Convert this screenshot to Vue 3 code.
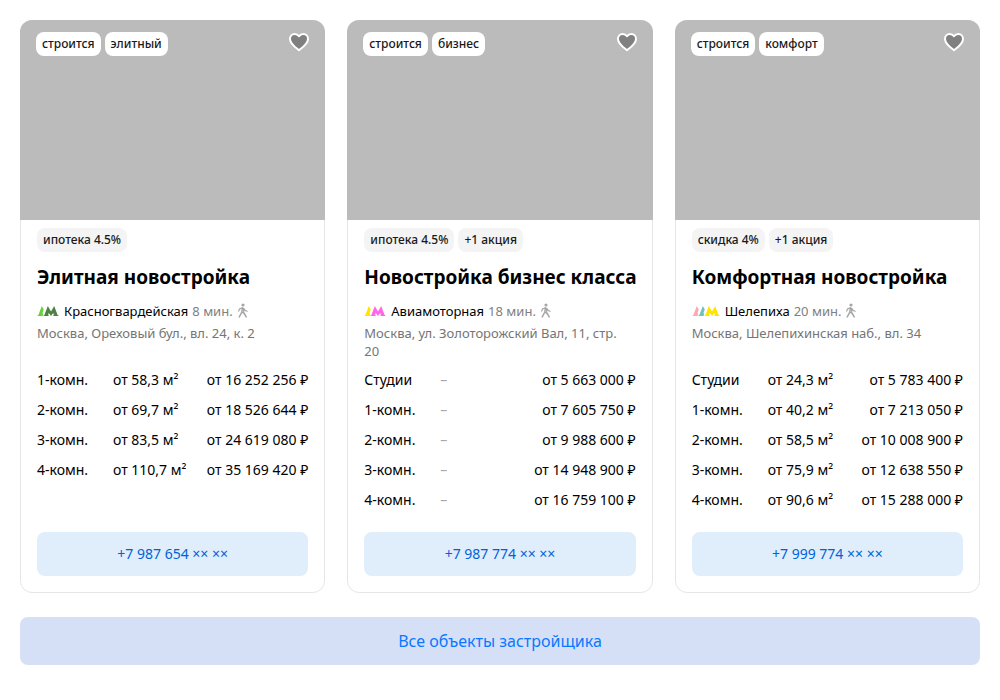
<script setup>
const cards = [
  {
    title: 'Элитная новостройка',
    labels: ['строится', 'элитный'],
    offers: ['ипотека 4.5%'],
    lines: ['#67d337', '#4f8242'],
    metro: 'Красногвардейская',
    time: '8 мин.',
    address: 'Москва, Ореховый бул., вл. 24, к. 2',
    rooms: [
      ['1-комн.', 'от 58,3 м²', 'от 16 252 256 ₽'],
      ['2-комн.', 'от 69,7 м²', 'от 18 526 644 ₽'],
      ['3-комн.', 'от 83,5 м²', 'от 24 619 080 ₽'],
      ['4-комн.', 'от 110,7 м²', 'от 35 169 420 ₽'],
    ],
    phone: '+7 987 654 ×× ××',
  },
  {
    title: 'Новостройка бизнес класса',
    labels: ['строится', 'бизнес'],
    offers: ['ипотека 4.5%', '+1 акция'],
    lines: ['#ffe400', '#ff66e8'],
    metro: 'Авиамоторная',
    time: '18 мин.',
    address: 'Москва, ул. Золоторожский Вал, 11, стр. 20',
    rooms: [
      ['Студии', '', 'от 5 663 000 ₽'],
      ['1-комн.', '', 'от 7 605 750 ₽'],
      ['2-комн.', '', 'от 9 988 600 ₽'],
      ['3-комн.', '', 'от 14 948 900 ₽'],
      ['4-комн.', '', 'от 16 759 100 ₽'],
    ],
    phone: '+7 987 774 ×× ××',
  },
  {
    title: 'Комфортная новостройка',
    labels: ['строится', 'комфорт'],
    offers: ['скидка 4%', '+1 акция'],
    lines: ['#ffa8af', '#6fc1ba', '#ffe400'],
    metro: 'Шелепиха',
    time: '20 мин.',
    address: 'Москва, Шелепихинская наб., вл. 34',
    rooms: [
      ['Студии', 'от 24,3 м²', 'от 5 783 400 ₽'],
      ['1-комн.', 'от 40,2 м²', 'от 7 213 050 ₽'],
      ['2-комн.', 'от 58,5 м²', 'от 10 008 900 ₽'],
      ['3-комн.', 'от 75,9 м²', 'от 12 638 550 ₽'],
      ['4-комн.', 'от 90,6 м²', 'от 15 288 000 ₽'],
    ],
    phone: '+7 999 774 ×× ××',
  },
]

const metroWidth = (card) => 16 + (card.lines.length - 1) * 6
</script>

<template>
  <main class="page">
    <section class="cards">
      <article v-for="card in cards" :key="card.title" class="card">
        <div class="photo">
          <ul class="tags">
            <li v-for="label in card.labels" :key="label" class="tag tag-light">{{ label }}</li>
          </ul>
          <button class="like" type="button" aria-label="В избранное">
            <svg width="24" height="24" viewBox="0 0 24 24">
              <path
                d="M12 20.2C8.6 17.6 3 13.8 3 8.9C3 6 5.1 3.9 7.6 3.9C9.5 3.9 11 4.7 12 6.2C13 4.7 14.5 3.9 16.4 3.9C18.9 3.9 21 6 21 8.9C21 13.8 15.4 17.6 12 20.2Z"
                fill="#808080"
                stroke="#fff"
                stroke-width="2"
                stroke-linejoin="round"
              />
            </svg>
          </button>
        </div>
        <div class="body">
          <ul class="tags">
            <li v-for="offer in card.offers" :key="offer" class="tag">{{ offer }}</li>
          </ul>
          <h3 class="title">{{ card.title }}</h3>
          <div class="metro">
            <svg :width="metroWidth(card)" height="12" :viewBox="`0 0 ${metroWidth(card)} 12`" aria-hidden="true">
              <template v-for="(color, i) in card.lines" :key="color">
                <path
                  v-if="i < card.lines.length - 1"
                  :transform="`translate(${i * 6} 0)`"
                  d="M0.5 11V10.2H1.3L4.8 1L6.8 4.6L5.6 7.6L6 9.6L5.6 11H0.5Z"
                  :fill="color"
                />
                <path
                  v-else
                  :transform="`translate(${i * 6} 0)`"
                  d="M0.5 11V10.2H1.3L4.8 1L8 6.6L11.2 1L14.7 10.2H15.5V11H10.2V10.2H11L10.2 7.9L8 11L5.8 7.9L5 10.2H5.8V11Z"
                  :fill="color"
                />
              </template>
            </svg>
            <span class="station">{{ card.metro }}</span>
            <span class="time">{{ card.time }}</span>
            <svg class="walk" width="12" height="16" viewBox="0 0 12 16" fill="none" stroke="#a6a6a6" aria-hidden="true">
              <circle cx="6" cy="2" r="1.6" fill="#a6a6a6" stroke="none" />
              <path d="M5.5 4.5L4.8 9L2 14.5M5 9L7.5 10.8L9.5 14.5" stroke-width="1.5" />
              <path d="M5.8 4.6L2.5 6L1.5 8.5M6.3 4.8L8 7.2L10.5 8.5M6.5 5L6.8 10" stroke-width="1.2" />
            </svg>
          </div>
          <p class="address">{{ card.address }}</p>
          <table class="rooms">
            <tbody>
              <tr v-for="room in card.rooms" :key="room[0]">
                <th scope="row">{{ room[0] }}</th>
                <td :class="{ empty: !room[1] }">{{ room[1] || '–' }}</td>
                <td class="price">{{ room[2] }}</td>
              </tr>
            </tbody>
          </table>
          <button class="phone" type="button">{{ card.phone }}</button>
        </div>
      </article>
    </section>
    <a class="all" href="#">Все объекты застройщика</a>
  </main>
</template>

<style>
body {
  background: #fff;
}
</style>

<style scoped>
.page {
  padding: 20px;
  font-family: "Noto Sans", "Open Sans", sans-serif;
  font-size: 14px;
  line-height: 18px;
  color: #000;
}
.page * {
  box-sizing: border-box;
}
.cards {
  display: grid;
  grid-template-columns: repeat(3, minmax(0, 1fr));
  gap: 22px;
}
.card {
  display: flex;
  flex-direction: column;
  border: 1px solid #e6e6e6;
  border-radius: 12px;
}
.photo {
  display: flex;
  justify-content: space-between;
  align-items: flex-start;
  height: 200px;
  margin: -1px -1px 0;
  padding: 12px 14px 0 16px;
  background: #bbb;
  border-radius: 12px 12px 0 0;
}
.tags {
  display: flex;
  gap: 4px;
  margin: 0;
  padding: 0;
  list-style: none;
}
.tag {
  padding: 0 6px;
  border-radius: 8px;
  background: #f4f4f4;
  color: #1a1a1a;
  font-size: 12px;
  font-weight: 500;
  line-height: 24px;
  white-space: nowrap;
}
.tag-light {
  background: #fff;
}
.like {
  height: 24px;
  margin-top: -2px;
  padding: 0;
  border: 0;
  background: none;
}
.like svg {
  display: block;
}
.body {
  display: flex;
  flex: 1;
  flex-direction: column;
  padding: 8px 16px 16px;
}
.title {
  margin: 11px 0;
  font-size: 19px;
  font-weight: 700;
  line-height: 28px;
  white-space: nowrap;
}
.metro {
  display: flex;
  align-items: center;
  height: 18px;
  font-size: 13px;
  white-space: nowrap;
}
.station {
  margin-left: 5px;
}
.time {
  margin-left: 4px;
  color: #808080;
}
.walk {
  margin-left: 4px;
}
.address {
  min-height: 36px;
  margin: 4px 0 5px;
  padding-right: 8px;
  color: #757575;
  font-size: 13px;
}
.rooms {
  width: 100%;
  margin-bottom: 17px;
  border-collapse: collapse;
  white-space: nowrap;
}
.rooms th,
.rooms td {
  height: 30px;
  padding: 0;
  font-weight: 400;
  text-align: left;
}
.rooms th {
  width: 76px;
}
.rooms .empty {
  color: #a6a6a6;
}
.rooms .price {
  text-align: right;
}
.phone {
  height: 44px;
  margin-top: auto;
  padding: 0;
  border: 0;
  border-radius: 8px;
  background: #e0edfb;
  color: #0062d9;
  font: inherit;
}
.all {
  display: block;
  margin-top: 24px;
  border-radius: 8px;
  background: #d5e0f7;
  color: #0a78ff;
  font-size: 16px;
  line-height: 48px;
  text-align: center;
  text-decoration: none;
}
</style>
